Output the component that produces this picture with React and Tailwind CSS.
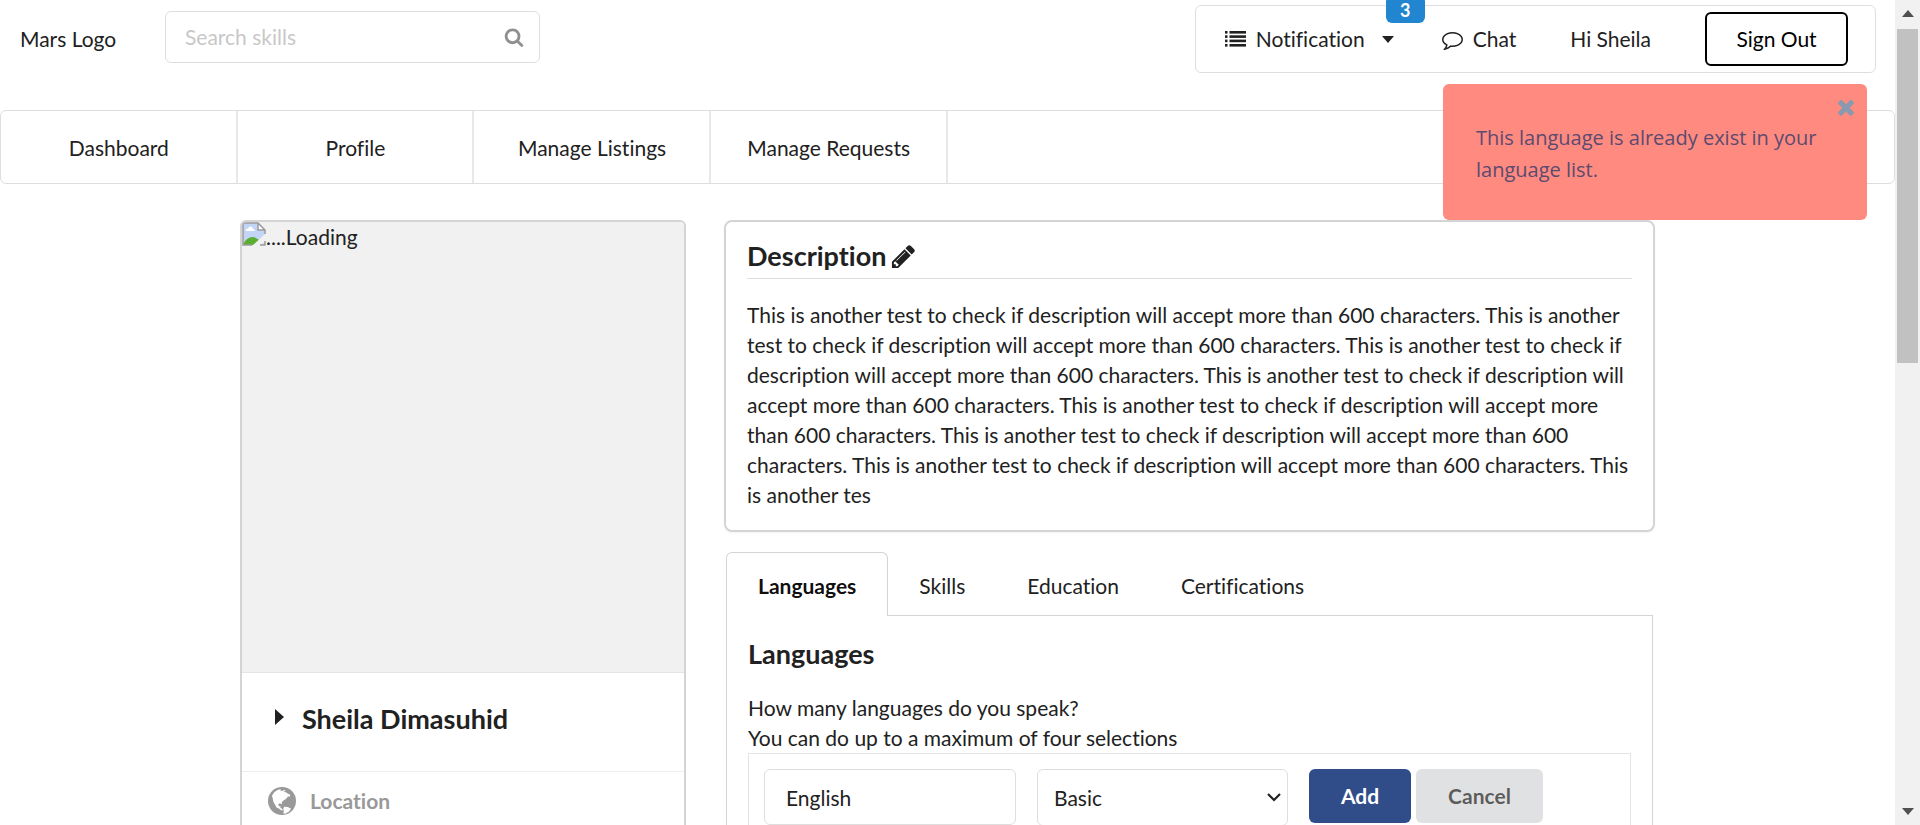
import React from 'react';

const FA = ({ d, className }) => (
  <svg viewBox="0 0 1792 1792" fill="currentColor" aria-hidden="true" className={className}>
    <path d={d} />
  </svg>
);

const SEARCH =
  'M1216 832q0-185-131.5-316.5t-316.5-131.5-316.5 131.5-131.5 316.5 131.5 316.5 316.5 131.5 316.5-131.5 131.5-316.5zm512 832q0 52-38 90t-90 38q-54 0-90-38l-343-342q-179 124-399 124-143 0-273.5-55.5t-225-150-150-225-55.5-273.5 55.5-273.5 150-225 225-150 273.5-55.5 273.5 55.5 225 150 150 225 55.5 273.5q0 220-124 399l343 343q37 37 37 90z';
const PENCIL =
  'M491 1536l91-91-235-235-91 91v107h128v128h107zm523-928q0-22-22-22-10 0-17 7l-542 542q-7 7-7 17 0 22 22 22 10 0 17-7l542-542q7-7 7-17zm-54-192l416 416-832 832h-416v-416zm683 96q0 53-37 90l-166 166-416-416 166-165q36-38 90-38 53 0 91 38l235 234q37 39 37 91z';
const COMMENT =
  'M896 384q-204 0-381.5 69.5t-282 187.5-104.5 255q0 112 71.5 213.5t201.5 175.5l87 50-27 96q-24 91-70 172 152-63 275-171l43-38 57 6q69 8 130 8 204 0 381.5-69.5t282-187.5 104.5-255-104.5-255-282-187.5-381.5-69.5zm896 512q0 174-120 321.5t-326 233-450 85.5q-70 0-145-8-198 175-460 242-49 14-114 22h-5q-15 0-27-10.5t-16-27.5v-1q-3-4-.5-12t2-10 4.5-9.5l6-9 7-8.5 8-9q7-8 31-34.5t34.5-38 31-39.5 32.5-51 27-59 26-76q-157-89-247.5-220t-90.5-281q0-174 120-321.5t326-233 450-85.5 450 85.5 326 233 120 321.5z';
const TIMES =
  'M1490 1322q0 40-28 68l-136 136q-28 28-68 28t-68-28l-294-294-294 294q-28 28-68 28t-68-28l-136-136q-28-28-28-68t28-68l294-294-294-294q-28-28-28-68t28-68l136-136q28-28 68-28t68 28l294 294 294-294q28-28 68-28t68 28l136 136q28 28 28 68t-28 68l-294 294 294 294q28 28 28 68z';

const ListIcon = () => (
  <svg viewBox="0 0 21 16" fill="currentColor" aria-hidden="true" className="h-4 w-[21px]">
    {[0, 4.3, 8.6, 13].map((y) => (
      <g key={y}>
        <rect x="0" y={y} width="2.500" height="2.600" />
        <rect x="4.500" y={y} width="16.500" height="2.600" />
      </g>
    ))}
  </svg>
);

const Globe = () => (
  <svg viewBox="0 0 28 28" aria-hidden="true" className="size-7">
    <circle cx="14" cy="14" r="14" fill="#999" />
    <path
      fill="#fff"
      d="M4 8.500L6.500 5 10 2.800l3-.6-.8 1.400 2 .4 2-1 1.500.6-2.200 1.400 2.600.2 1.400 1.400 2.800 1.200-.6 2-1.800-.6-.8 1.600-2 1.800-2 1.200-1.400 1.800.4 1.800-1.600-1-1.400.2-.8 1.200.6 1.400 1.600-.2-.2 1.800 1.400.6.4 1.200 1.200.2-.6.8-2-.6-1.800-1.600-2.400-1-1.400-2.600-1.600-2.600L4.800 12z M16.200 19.800l3.400.2 3.400 1.600-1.600 2.600-3.600 2.200-2.400.4.400-3.400-.6-1.800z"
    />
  </svg>
);

const BrokenImage = () => (
  <svg viewBox="0 0 24 24" aria-hidden="true" className="size-6 shrink-0">
    <path d="M1 1h15l7 7v15H1z" fill="#c3d5f7" />
    <path d="M3.500 9q0-2.500 2.500-2.500 1-2.500 3-2 2 .5 2 2.500 2 .2 2 2z" fill="#fff" />
    <path d="M1 23c1.500-5 6-8 9.500-8 4 0 7 3 10 8z" fill="#5aaf33" />
    <path d="M24 11L10 24h8l6-5z" fill="#f1f1f1" />
    <path d="M16 1v7h7z" fill="#fff" />
    <path d="M10 23H1V1h15l7 7v4M16 1v7h7M18 23h5v-4" fill="none" stroke="#9b9b9b" strokeWidth="1.500" />
  </svg>
);

const DESCRIPTION =
  'This is another test to check if description will accept more than 600 characters. '.repeat(7) +
  'This is another tes';

const navItems = ['Dashboard', 'Profile', 'Manage Listings', 'Manage Requests'];

function Header() {
  return (
    <header className="flex items-start justify-between pr-[19px] pl-5">
      <div className="flex items-center pt-[11px]">
        <a href="#home" className="w-[145px] pt-1">Mars Logo</a>
        <label className="flex h-[52px] w-[375px] items-center rounded-md border border-[#dededf] pr-[15px] pl-[19px]">
          <input
            type="text"
            aria-label="Search skills"
            placeholder="Search skills"
            className="h-full min-w-0 flex-1 pb-[2px] outline-none placeholder:text-[#c8c8c8]"
          />
          <FA d={SEARCH} className="size-5 text-[#909090]" />
        </label>
      </div>
      <div className="mt-[5px] flex h-[68px] items-center rounded-md border border-[#dededf] pr-[27px] pl-[29px]">
        <button type="button" className="relative flex items-center">
          <ListIcon />
          <span className="ml-[10px]">Notification</span>
          <svg viewBox="0 0 12 7" aria-hidden="true" className="ml-[17px] h-[7px] w-3" fill="currentColor">
            <path d="M0 0h12L6 7z" />
          </svg>
          <span className="absolute -top-7 left-[161px] flex h-[27px] w-[39px] items-center justify-center rounded-md bg-[#2185d0] text-lg leading-none font-bold text-white">
            3
          </span>
        </button>
        <a href="#chat" className="ml-12 flex items-center">
          <FA d={COMMENT} className="size-[21px]" />
          <span className="ml-[10px]">Chat</span>
        </a>
        <span className="ml-[54px]">Hi Sheila</span>
        <button
          type="button"
          className="ml-[54px] flex h-[54px] w-[143px] items-center justify-center rounded-md border-2 border-black text-black"
        >
          Sign Out
        </button>
      </div>
    </header>
  );
}

function ProfileCard() {
  return (
    <aside className="h-[900px] w-[446px] shrink-0 overflow-hidden rounded-md border-2 border-[#d4d4d5] bg-white">
      <div className="flex h-[451px] items-start border-b border-[#e4e4e4] bg-[#f1f1f1]">
        <BrokenImage />
        <span className="leading-[30px]">....Loading</span>
      </div>
      <h2 className="flex h-[99px] items-center border-b border-[#eeeeee] pb-[6px] pl-[33px] text-[27px] font-bold">
        <svg viewBox="0 0 9 16" aria-hidden="true" className="mr-[18px] mb-1 h-4 w-[9px]" fill="currentColor">
          <path d="M0 0l9 8-9 8z" />
        </svg>
        Sheila Dimasuhid
      </h2>
      <div className="flex items-center gap-[14px] pt-[14px] pl-[26px] font-bold text-[#999]">
        <Globe />
        Location
      </div>
    </aside>
  );
}

function LanguagesPanel() {
  return (
    <section className="mt-5 px-[2px]">
      <div role="tablist" className="flex h-16 items-stretch">
        <button
          type="button"
          role="tab"
          aria-selected="true"
          className="rounded-t-md border border-b-0 border-[#d4d4d5] px-[31px] pt-[2px] font-bold text-black/95"
        >
          Languages
        </button>
        <div className="flex flex-1 border-b border-[#d4d4d5]">
          {['Skills', 'Education', 'Certifications'].map((tab) => (
            <button key={tab} type="button" role="tab" aria-selected="false" className="px-[31px] pt-1">
              {tab}
            </button>
          ))}
        </div>
      </div>
      <div className="h-[400px] border-x border-[#d4d4d5] px-[21px] pt-5">
        <h3 className="text-[27px] leading-9 font-bold">Languages</h3>
        <p className="mt-[21px] leading-[30px]">
          How many languages do you speak?
          <br />
          You can do up to a maximum of four selections
        </p>
        <form className="flex h-[280px] items-start border border-[#e4e4e4] px-[15px] pt-[15px]">
          <input
            type="text"
            aria-label="Language"
            defaultValue="English"
            className="mr-[21px] h-14 w-[252px] rounded-md border border-[#dededf] px-[21px]"
          />
          <span className="relative mr-[21px] w-[251px]">
            <select
              aria-label="Language level"
              className="h-[57px] w-full appearance-none rounded-md border border-[#dededf] bg-white px-4"
            >
              <option>Basic</option>
              <option>Conversational</option>
              <option>Fluent</option>
            </select>
            <svg viewBox="0 0 14 9" aria-hidden="true" className="pointer-events-none absolute top-6 right-[7px] h-[9px] w-[14px]">
              <path d="M1 1l6 6 6-6" fill="none" stroke="#222" strokeWidth="2.200" />
            </svg>
          </span>
          <button type="button" className="mr-[5px] h-[54px] w-[102px] rounded-md bg-[#304d8a] font-bold text-white">
            Add
          </button>
          <button type="button" className="h-[54px] w-[127px] rounded-md bg-[#e0e1e2] font-bold text-black/60">
            Cancel
          </button>
        </form>
      </div>
    </section>
  );
}

function Toast() {
  return (
    <div
      role="alert"
      className="absolute top-[84px] right-[53px] min-h-[136px] w-[424px] rounded-md bg-[#ff8a80] px-[33px] pt-[38px] font-['Open_Sans','Noto_Sans',sans-serif] text-xl leading-8 text-[#5b4a70]"
    >
      This language is already exist in your language list.
      <button type="button" aria-label="Close" className="absolute top-[11px] right-[9px] text-[#8a99ad]">
        <FA d={TIMES} className="size-6" />
      </button>
    </div>
  );
}

function ScrollTrack() {
  return (
    <div aria-hidden="true" className="flex w-[25px] shrink-0 flex-col items-center justify-between bg-[#f1f1f1] text-[#505050]">
      <svg viewBox="0 0 12 7" className="mt-[10px] h-[7px] w-3" fill="currentColor">
        <path d="M0 7h12L6 0z" />
      </svg>
      <div className="mt-3 h-[334px] w-[21px] bg-[#c1c1c1]" />
      <div className="flex-1" />
      <svg viewBox="0 0 12 7" className="mb-[10px] h-[7px] w-3" fill="currentColor">
        <path d="M0 0h12L6 7z" />
      </svg>
    </div>
  );
}

export default function App() {
  return (
    <div className="relative flex h-screen overflow-hidden bg-white font-['Lato',sans-serif] text-[21px] leading-[30px] text-[#212121] [font-variant-ligatures:no-common-ligatures]">
      <div className="min-w-0 flex-1 overflow-hidden">
        <Header />
        <nav className="mt-[37px] flex h-[74px] rounded-md border border-[#dededf]">
          {navItems.map((item) => (
            <a
              key={item}
              href="#nav"
              className="flex w-1/8 items-center justify-center border-r-2 border-[#e8e8e8] pt-[2px] pl-px"
            >
              {item}
            </a>
          ))}
        </nav>
        <main className="mx-auto mt-9 flex max-w-[1415px] items-start gap-[38px]">
          <ProfileCard />
          <div className="min-w-0 flex-1">
            <section className="rounded-lg border-2 border-[#d4d4d5] px-[21px] pt-4 pb-5 shadow-xs">
              <h2 className="flex items-center gap-1 border-b border-[#dededf] pb-1 text-[27px] leading-9 font-bold">
                Description
                <FA d={PENCIL} className="size-[27px]" />
              </h2>
              <p className="mt-[21px] leading-[30px]">{DESCRIPTION}</p>
            </section>
            <LanguagesPanel />
          </div>
        </main>
      </div>
      <ScrollTrack />
      <Toast />
    </div>
  );
}
